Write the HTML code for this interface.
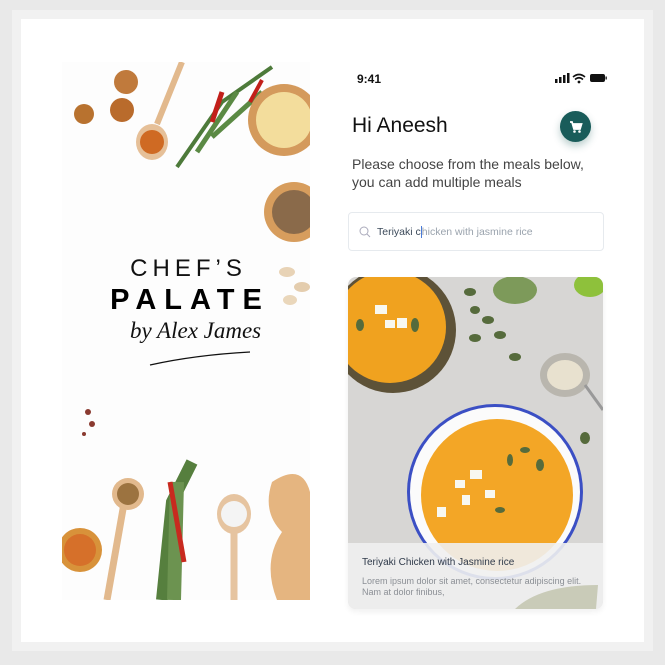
<!DOCTYPE html>
<html><head><style>
*{margin:0;padding:0;box-sizing:border-box}
body{width:665px;height:665px;background:#e9e9e9;position:relative;overflow:hidden;font-family:"Liberation Sans",sans-serif}
.frame{position:absolute;left:12px;top:10px;width:641px;height:641px;background:#f1f1f1}
.card{position:absolute;left:21px;top:19px;width:623px;height:623px;background:#fff}
.abs{position:absolute}
</style></head><body>
<div class="frame"></div>
<div class="card"></div>

<svg class="abs" style="left:62px;top:62px" width="248" height="538" viewBox="0 0 248 538">
<rect width="248" height="538" fill="#fdfdfd"/>
<circle cx="64" cy="20" r="12" fill="#c07a3c"/>
<circle cx="60" cy="48" r="12" fill="#b96b2c"/>
<circle cx="22" cy="52" r="10" fill="#b8722f"/>
<path d="M120 0 L95 62" stroke="#e2b98d" stroke-width="6"/>
<ellipse cx="90" cy="80" rx="16" ry="18" fill="#e6c098"/>
<circle cx="90" cy="80" r="12" fill="#cf6a23"/>
<path d="M115 105 L160 40 L210 5" stroke="#4d7a3a" stroke-width="4" fill="none"/>
<path d="M135 90 L175 30 M150 75 L200 30" stroke="#5b8a44" stroke-width="5" fill="none"/>
<path d="M150 60 L160 30" stroke="#c21f1a" stroke-width="5"/>
<path d="M188 40 L200 18" stroke="#c21f1a" stroke-width="4"/>
<circle cx="222" cy="58" r="36" fill="#d49a5c"/>
<circle cx="222" cy="58" r="28" fill="#f3dd9c"/>
<circle cx="232" cy="150" r="30" fill="#d79d5d"/>
<circle cx="232" cy="150" r="22" fill="#8a6a4a"/>
<ellipse cx="225" cy="210" rx="8" ry="5" fill="#e8d3b6"/>
<ellipse cx="240" cy="225" rx="8" ry="5" fill="#e4cdae"/>
<ellipse cx="228" cy="238" rx="7" ry="5" fill="#ead7bb"/>
<circle cx="26" cy="350" r="3" fill="#8a3a30"/><circle cx="30" cy="362" r="3" fill="#8a3a30"/><circle cx="22" cy="372" r="2" fill="#8a3a30"/>
<circle cx="18" cy="488" r="22" fill="#d8923a"/>
<circle cx="18" cy="488" r="16" fill="#d6702a"/>
<path d="M64 430 L45 538" stroke="#e2b98d" stroke-width="7"/>
<circle cx="66" cy="432" r="16" fill="#e2b98d"/>
<circle cx="66" cy="432" r="11" fill="#9c7340"/>
<path d="M100 538 L110 440 L130 400" stroke="#567f3e" stroke-width="12" fill="none"/>
<path d="M112 538 L115 420" stroke="#6c9350" stroke-width="14" fill="none"/>
<path d="M108 420 L122 500" stroke="#c82a1f" stroke-width="5"/>
<path d="M172 538 L172 470" stroke="#e6c4a0" stroke-width="7"/>
<ellipse cx="172" cy="452" rx="17" ry="20" fill="#e6c4a0"/>
<circle cx="172" cy="452" r="13" fill="#f4f4f4"/>
<path d="M210 420 Q240 400 248 430 L248 538 L215 538 Q200 500 220 470 Q200 450 210 420Z" fill="#e5b580"/>
</svg>
<div class="abs" style="left:62px;top:255px;width:248px;text-align:center;font-size:24px;letter-spacing:5px;color:#111;line-height:28px;padding-left:5px">CHEF’S</div>
<div class="abs" style="left:62px;top:283px;width:248px;text-align:center;font-size:29px;font-weight:bold;letter-spacing:8px;color:#000;line-height:34px;padding-left:8px">PALATE</div>
<div class="abs" style="left:130px;top:318px;width:140px;font-family:'Liberation Serif',serif;font-style:italic;font-size:23px;color:#111">by Alex James</div>
<svg class="abs" style="left:145px;top:350px" width="110" height="20"><path d="M5 15 Q50 5 105 2" stroke="#111" stroke-width="1.3" fill="none"/></svg>

<div class="abs" style="left:357px;top:72px;font-size:12px;font-weight:bold;color:#111">9:41</div>
<svg class="abs" style="left:555px;top:72px" width="52" height="12">
<rect x="0" y="7" width="2.5" height="4" fill="#111"/><rect x="4" y="5" width="2.5" height="6" fill="#111"/><rect x="8" y="3" width="2.5" height="8" fill="#111"/><rect x="12" y="1" width="2.5" height="10" fill="#111"/>
<path d="M18 5 Q24 0 30 5 M20 7.5 Q24 4 28 7.5" stroke="#111" stroke-width="1.6" fill="none"/><circle cx="24" cy="10" r="1.4" fill="#111"/>
<rect x="35" y="2" width="15" height="8" rx="2" fill="#111"/><rect x="50.5" y="4.5" width="1.3" height="3" fill="#111"/>
</svg>
<div class="abs" style="left:352px;top:114px;font-size:21px;color:#111">Hi Aneesh</div>
<div class="abs" style="left:560px;top:111px;width:31px;height:31px;border-radius:50%;background:#195c5a;box-shadow:0 4px 8px rgba(25,92,90,.3)">
<svg width="31" height="31" viewBox="0 0 31 31"><path d="M10 11 L12 11 L14 18 L20 18 L21.5 13 L13 13" stroke="#fff" stroke-width="1.8" fill="#fff"/><circle cx="14.5" cy="20.5" r="1.3" fill="#fff"/><circle cx="19.5" cy="20.5" r="1.3" fill="#fff"/></svg></div>
<div class="abs" style="left:352px;top:155px;font-size:14px;line-height:18px;color:#444">Please choose from the meals below,<br>you can add multiple meals</div>
<div class="abs" style="left:348px;top:212px;width:256px;height:39px;border:1px solid #e6eaee;border-radius:4px;background:#fff"></div>
<svg class="abs" style="left:359px;top:226px" width="12" height="12"><circle cx="5" cy="5" r="4" stroke="#aab" stroke-width="1" fill="none"/><path d="M8 8 L11 11" stroke="#aab"/></svg>
<div class="abs" style="left:377px;top:226px;font-size:10.5px;color:#9aa3ad"><span style="color:#3c4a5a">Teriyaki c</span><span style="border-left:1px solid #4a7bd8">hicken with jasmine rice</span></div>

<div class="abs" style="left:348px;top:277px;width:255px;height:332px;border-radius:8px;overflow:hidden;box-shadow:0 3px 6px rgba(0,0,0,.06)">
<svg width="255" height="332" viewBox="348 277 255 332">
<rect x="348" y="277" width="255" height="332" fill="#d7d6d4"/>
<circle cx="393" cy="330" r="63" fill="#5d5238"/>
<circle cx="390" cy="327" r="56" fill="#f0a21f"/>
<ellipse cx="515" cy="290" rx="22" ry="14" fill="#7d9a5a"/>
<ellipse cx="590" cy="285" rx="16" ry="12" fill="#8ec13b"/>
<ellipse cx="565" cy="375" rx="25" ry="22" fill="#b9b6ae"/>
<ellipse cx="565" cy="375" rx="18" ry="15" fill="#e8e1cf"/>
<path d="M585 385 L603 410" stroke="#999" stroke-width="3"/>
<circle cx="495" cy="492" r="88" fill="#3b4fc4"/>
<circle cx="495" cy="492" r="85" fill="#fbfbfb"/>
<circle cx="497" cy="495" r="76" fill="#f3a626"/>
<g fill="#f8f8f0"><rect x="455" y="480" width="10" height="8"/><rect x="470" y="470" width="12" height="9"/><rect x="485" y="490" width="10" height="8"/><rect x="462" y="495" width="8" height="10"/><rect x="437" y="507" width="9" height="10"/><rect x="375" y="305" width="12" height="9"/><rect x="385" y="320" width="10" height="8"/><rect x="397" y="318" width="10" height="10"/></g>
<g fill="#566b3c"><ellipse cx="510" cy="460" rx="3" ry="6"/><ellipse cx="525" cy="450" rx="5" ry="3"/><ellipse cx="540" cy="465" rx="4" ry="6"/><ellipse cx="500" cy="510" rx="5" ry="3"/><ellipse cx="360" cy="325" rx="4" ry="6"/><ellipse cx="415" cy="325" rx="4" ry="7"/><ellipse cx="470" cy="292" rx="6" ry="4"/><ellipse cx="475" cy="310" rx="5" ry="4"/><ellipse cx="488" cy="320" rx="6" ry="4"/><ellipse cx="475" cy="338" rx="6" ry="4"/><ellipse cx="500" cy="335" rx="6" ry="4"/><ellipse cx="515" cy="357" rx="6" ry="4"/><ellipse cx="585" cy="438" rx="5" ry="6"/></g>
<rect x="348" y="543" width="255" height="66" fill="#efefef" opacity="0.9"/>
<path d="M515 609 Q540 585 598 585 L596 609Z" fill="#c9cbb8"/>
</svg>
</div>
<div class="abs" style="left:362px;top:557px;font-size:10px;color:#2f3a4a">Teriyaki Chicken with Jasmine rice</div>
<div class="abs" style="left:362px;top:576px;font-size:9px;line-height:11px;color:#8b8f95">Lorem ipsum dolor sit amet, consectetur adipiscing elit.<br>Nam at dolor finibus,</div>
</body></html>
